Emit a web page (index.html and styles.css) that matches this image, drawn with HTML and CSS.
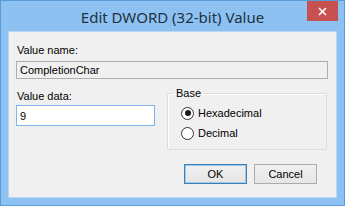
FILE: index.html
```html
<!DOCTYPE html>
<html lang="en">
<head>
    <meta charset="UTF-8">
    <meta name="viewport" content="width=device-width, initial-scale=1.0">
    <title>Edit DWORD (32-bit) Value</title>
    <link rel="stylesheet" href="styles.css">
</head>
<body>

    <div class="window">
        <div class="titlebar">
            <span class="title">Edit DWORD (32-bit) Value</span>
            <button class="close" aria-label="Close">
                <svg width="9" height="9" viewBox="0 0 9 9">
                    <path d="M1 1 L8 8 M8 1 L1 8" stroke="#fff" stroke-width="1.6" fill="none"/>
                </svg>
            </button>
        </div>

        <div class="content">
            <div class="label">Value name:</div>
            <div class="field readonly">CompletionChar</div>

            <div class="row">
                <div class="col">
                    <div class="label">Value data:</div>
                    <div class="field data">9</div>
                </div>
                <fieldset class="base">
                    <legend>Base</legend>
                    <div class="radio"><span class="dot checked"></span>Hexadecimal</div>
                    <div class="radio"><span class="dot"></span>Decimal</div>
                </fieldset>
            </div>

            <div class="buttons">
                <button class="btn default">OK</button>
                <button class="btn">Cancel</button>
            </div>
        </div>
    </div>

</body>
</html>
```

FILE: styles.css
```css
/* page */
body {
    margin: 0;
    font-family: "Liberation Sans", Arial, sans-serif;
    font-size: 11px;
    color: #000;
}

/* window frame */
.window {
    width: 345px;
    height: 206px;
    box-sizing: border-box;
    border: 1px solid #5b9bd5;
    background-color: #8dc1f2;
    display: flex;
    flex-direction: column;
    position: relative;
}

.titlebar {
    height: 30px;
    display: flex;
    justify-content: center;
    align-items: center;
}

.title {
    font-family: "Noto Sans", sans-serif;
    font-size: 15px;
    color: #22313f;
    padding-top: 1px;
}

.close {
    position: absolute;
    top: 0;
    right: 6px;
    width: 31px;
    height: 20px;
    border: none;
    padding: 0;
    background-color: #c75050;
    display: flex;
    justify-content: center;
    align-items: center;
}

/* dialog body */
.content {
    flex: 1;
    margin: 0 7px 7px;
    background-color: #f0f0f0;
    border: 1px solid #b9d7f4;
    padding: 0 7px;
    display: flex;
    flex-direction: column;
}

.label {
    line-height: 14px;
    padding-left: 1px;
}

.content > .label {
    margin-top: 11px;
    margin-bottom: 4px;
}

.field {
    box-sizing: border-box;
    border: 1px solid #abadb3;
    padding: 0 3px;
    display: flex;
    align-items: center;
}

.readonly {
    height: 18px;
    background-color: #f0f0f0;
    margin-right: 1px;
}

.row {
    display: flex;
    align-items: flex-start;
    gap: 12px;
    margin-top: 8px;
}

.col {
    display: flex;
    flex-direction: column;
    padding-top: 2px;
}

.col .label {
    margin-bottom: 2px;
}

.data {
    width: 139px;
    height: 21px;
    background-color: #fff;
    border-color: #7eb4ea;
}

/* group box */
.base {
    width: 160px;
    height: 63px;
    box-sizing: border-box;
    margin: 0;
    padding: 3px 0 0 13px;
    border: 1px solid #dcdcdc;
    box-shadow: inset 1px 1px #fff;
    border-radius: 2px;
}

.base legend {
    padding: 0 2px;
    margin-left: -7px;
    line-height: 13px;
}

.radio {
    display: flex;
    align-items: center;
    gap: 4px;
    height: 20px;
}

.dot {
    width: 11px;
    height: 11px;
    border: 1px solid #333;
    border-radius: 50%;
    background-color: #fff;
    display: flex;
    justify-content: center;
    align-items: center;
}

.dot.checked::after {
    content: "";
    width: 6px;
    height: 6px;
    border-radius: 50%;
    background-color: #1a1a1a;
}

/* buttons */
.buttons {
    display: flex;
    justify-content: flex-end;
    gap: 7px;
    margin-top: 14px;
    padding-right: 12px;
}

.btn {
    width: 63px;
    height: 20px;
    font-family: inherit;
    font-size: 11px;
    color: #000;
    border: 1px solid #acacac;
    border-radius: 0;
    background: linear-gradient(#f0f0f0, #e5e5e5);
    padding: 0;
}

.btn.default {
    border-color: #3c7fb1;
    box-shadow: inset 0 0 0 1px #9fc9ee;
}
```
